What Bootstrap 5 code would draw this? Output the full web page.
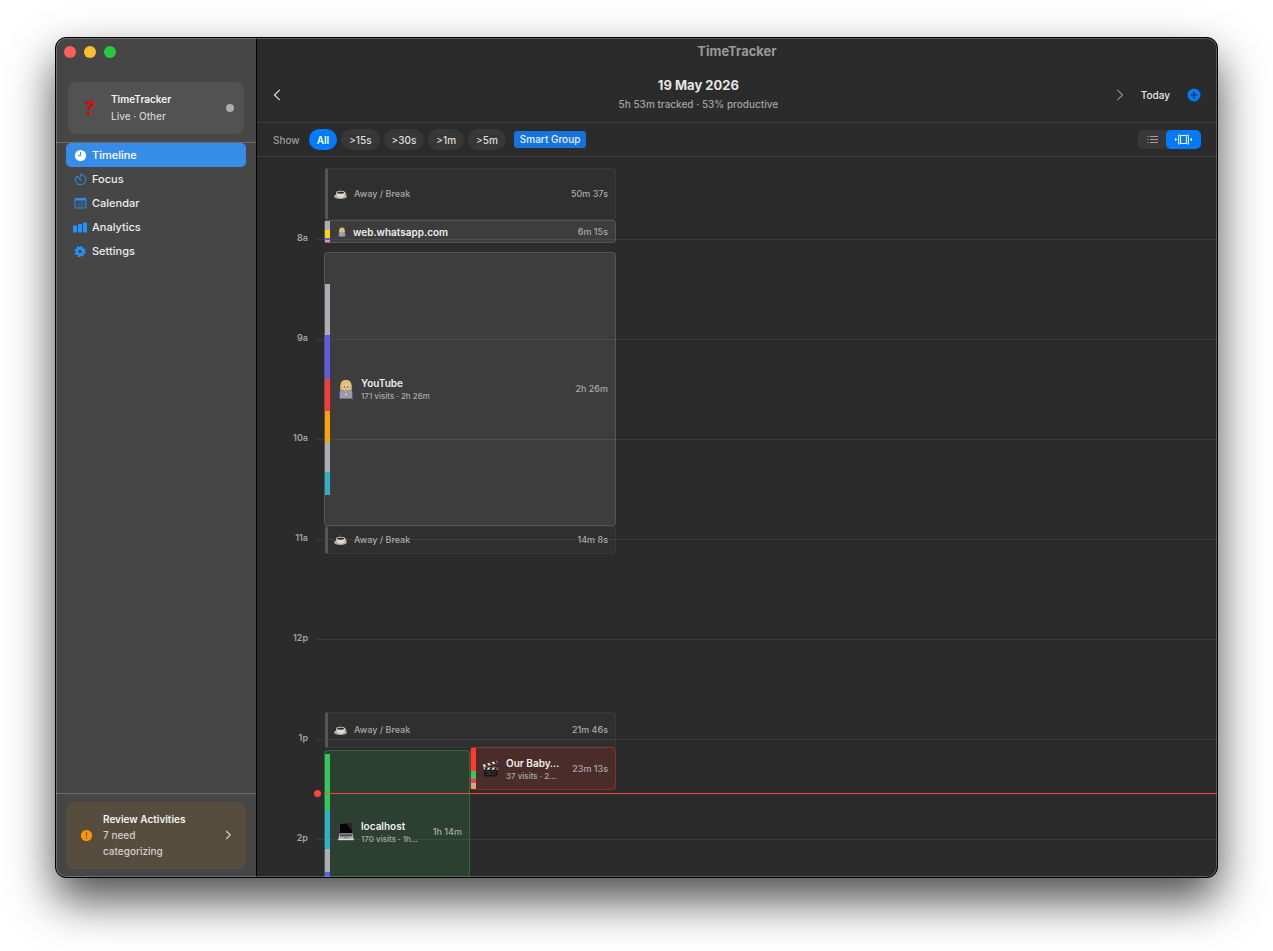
<!DOCTYPE html>
<html lang="en" data-bs-theme="dark">
<head>
<meta charset="utf-8">
<meta name="viewport" content="width=device-width, initial-scale=1">
<title>TimeTracker</title>
<link rel="stylesheet" href="https://cdn.jsdelivr.net/npm/bootstrap@5.3.0/dist/css/bootstrap.min.css">
<style>
  :root { --accent:#007aff; --rule:#3d3d3d; }
  body { background:#fff; color:#e4e4e4; font-family:Inter,"Liberation Sans",sans-serif; font-size:10px; line-height:16px; padding:37px 55px 73px; height:100vh; }
  button { font:inherit; color:inherit; border:0; background:none; padding:0; }
  svg { display:block; flex:none; }

  .window { height:100%; min-height:480px; background:#2b2b2b; border:1px solid #000; border-radius:11px; box-shadow:0 22px 46px rgba(0,0,0,.7); }
  .window::after { content:""; position:absolute; inset:0; border-radius:10px; box-shadow:inset 0 0 0 1px rgba(255,255,255,.22); pointer-events:none; z-index:5; }

  .sidebar { width:201px; background:#464646; border-right:1px solid #000; }
  .lights { padding:8px 8px 24px; gap:8px; }
  .light { width:12px; height:12px; border-radius:50%; }
  .l-close { background:#ff5f57; } .l-min { background:#febc2e; } .l-max { background:#28c840; }
  .status-card { margin:0 12px 8px; padding:10px; height:52px; gap:10px; border-radius:9px; background:#525252; font-weight:500; line-height:17px; color:#d0d0d0; }
  .status-icon { width:23px; color:#e30000; font:bold 20px/24px "Noto Sans",sans-serif; text-align:center; }
  .status-dot { width:8px; height:8px; border-radius:50%; background:#adadb0; }
  .side-rule { border-top:1px solid #6b6b6b; }
  .side-nav { padding:0 10px; }
  .side-nav .nav-link { height:24px; padding:0 8px; gap:5px; color:#ececec; border-radius:5px; font-size:11px; font-weight:500; }
  .side-nav .nav-link svg { width:13px; height:13px; color:#2292ff; }
  .side-nav .nav-link.active { background:#378ce7; color:#fff; }
  .side-nav .nav-link.active svg { color:#fff; }
  .review { margin:8px 10px; padding:9px 14px 10px; border-radius:8px; background:#574d3e; color:#d3cfc9; gap:10px; text-align:left; font-weight:500; }
  .review-count { max-width:80px; }
  .strong-text { font-weight:600; color:#f4f4f4; }

  .app-title { padding-top:4px; font-size:13px; font-weight:700; color:#999; line-height:18px; }
  .day-head { padding:16px 16px 9px; border-bottom:1px solid var(--rule); }
  .day-name { font-size:13px; font-weight:700; line-height:19px; }
  .day-sum { line-height:18px; font-weight:500; color:#a2a2a2; }
  .today { margin:0 17px; font-weight:500; }
  .filters { height:34px; padding:0 16px; border-bottom:1px solid var(--rule); }
  .show-label { margin-right:5px; font-weight:500; color:#9b9b9b; }
  .pill { height:21px; padding:0 8px; border-radius:11px; background:#373737; font-weight:500; color:#dedede; }
  .pill.active { background:var(--accent); color:#fff; font-weight:600; }
  .smart { height:17px; padding:0 6px; border-radius:3px; background:#1673dc; font-weight:500; line-height:17px; margin-left:4px; color:#e8f1fc; }
  .view-switch { height:19px; border-radius:5px; background:#373737; color:#aaa; overflow:hidden; }
  .view-switch button { width:28px; }
  .view-switch button.active { width:35px; border-radius:5px; background:var(--accent); color:#fff; }

  .timeline { min-height:0; scrollbar-width:none; }
  .timeline::-webkit-scrollbar { display:none; }
  .hours { padding-top:82px; }
  .hour { height:100px; }
  .hour time { width:51px; margin:-7px 8px 0 0; font-size:9px; font-weight:600; line-height:12px; color:#a3a3a3; text-align:right; }
  .hour i { border-top:1px solid rgba(255,255,255,.07); height:0; }
  .events { position:absolute; top:0; left:67px; width:292px; display:grid; grid-template-columns:1fr 1fr; grid-auto-rows:1px; }
  .event { grid-row:var(--from) / span var(--span); grid-column:1 / -1; min-width:0; position:relative; padding:0 7px 0 13px; gap:7px; border:1px solid rgba(255,255,255,.13); border-radius:4px; background:rgba(255,255,255,.085); }
  .event.half-a { grid-column:1; background:rgba(52,199,89,.14); border-color:rgba(52,199,89,.3); }
  .event.half-b { grid-column:2; padding-left:11px; background:rgba(255,59,48,.15); border-color:rgba(255,59,48,.3); }
  .event.away { margin-left:1px; padding-left:6px; gap:6px; background:rgba(255,255,255,.025); border-color:rgba(255,255,255,.05); border-left:3px solid #555; border-radius:2px 4px 4px 2px; }
  .away-name, .took { font-size:9px; font-weight:500; color:#aaa; white-space:nowrap; }
  .ev-name { font-weight:600; line-height:14px; color:#eee; white-space:nowrap; }
  .ev-sub { font-size:8px; font-weight:500; line-height:12px; color:#aaa; white-space:nowrap; }
  .strip { position:absolute; left:0; top:var(--lead,0); width:5px; }
  .strip b { display:block; }
  .c-gray { background:#aeaeb2; } .c-indigo { background:#5e5ce6; } .c-red { background:#ff3b30; } .c-orange { background:#ff9f0a; }
  .c-teal { background:#30b0c7; } .c-green { background:#34c759; } .c-yellow { background:#ffd60a; } .c-pink { background:#ff375f; }
  .now { position:absolute; left:57px; right:0; top:var(--at); gap:3px; z-index:2; }
  .now span { width:7px; height:7px; border-radius:50%; background:#ff453a; }
  .now i { height:1px; background:#f04a40; }
</style>
</head>
<body>
<svg class="d-none" aria-hidden="true">
  <symbol id="cup" viewBox="0 0 14 12">
    <ellipse cx="6.500" cy="8.400" rx="6.300" ry="2.600" fill="#b3afa8"/>
    <path d="M2.300 4.500h8.600c.2 3.400-1.600 5.300-4.300 5.300s-4.500-1.900-4.300-5.300z" fill="#dedbd5"/>
    <path d="M10.700 5.300c1.900-.4 2 1.700-.6 2.300" fill="none" stroke="#dedbd5" stroke-width=".9"/>
    <ellipse cx="6.600" cy="4.500" rx="4.300" ry="1.700" fill="#eceae5"/>
    <ellipse cx="6.600" cy="4.600" rx="3.600" ry="1.200" fill="#3f241a"/>
    <path d="M6 .5c-.8 1 .8 1.400 0 2.500" fill="none" stroke="#777" stroke-width=".6"/>
  </symbol>
  <symbol id="coder" viewBox="0 0 16 20">
    <path d="M.8 19v-3.500c0-3 2.500-4 7.200-4s7.200 1 7.200 4V19z" fill="#3346b5"/>
    <path d="M2.500 11.500C1.300 4.500 3.500 .8 8 .8s6.700 3.700 5.500 10.700z" fill="#dfc06c"/>
    <path d="M6 10h4v3H6z" fill="#d9a983"/>
    <path d="M4.400 6.500C5.800 6.200 7 5.600 8 4.600c1 1 2.200 1.600 3.600 1.900.2 3.200-1.400 5-3.600 5s-3.800-1.800-3.600-5z" fill="#efc6a1"/>
    <circle cx="6.400" cy="7.900" r=".7" fill="#4d3425"/><circle cx="9.600" cy="7.900" r=".7" fill="#4d3425"/>
    <path d="M7 10q1 .6 2 0" fill="none" stroke="#a8563f" stroke-width=".6"/>
    <rect x="1.800" y="11.600" width="12.400" height="7.600" rx=".8" fill="#9a9ca3"/>
    <circle cx="8" cy="15.300" r=".9" fill="#e6e6e8"/><path d="M1 19h14v.8H1z" fill="#777b84"/>
  </symbol>
  <symbol id="laptop" viewBox="0 0 18 19">
    <path d="M1.500 1h15v10.500h-15z" fill="#5b5b5b"/><path d="M2 1.500h14V11H2z" fill="#050505"/>
    <path d="M9 1.500h7V9z" fill="#242424"/>
    <path d="M1.700 11.500h14.600l1.400 5.500H.3z" fill="#b5b5b8"/><path d="M2.500 12.200h13l.6 2.300H1.900z" fill="#505055"/>
    <path d="M6.500 15h5l.3 1.500H6.200z" fill="#8b8b90"/><path d="M.3 17h17.400v1.200H.3z" fill="#e0e0e2"/>
  </symbol>
  <symbol id="clapper" viewBox="0 0 18 18">
    <path d="M2 8.500h14.500v8L14 17.500H2z" fill="#161616"/><path d="M2 8h14.500v2.300H2z" fill="#e5e5e5"/>
    <path d="M4 8h2.500L5 10.300H2.500zm5 0h2.500L10 10.300H7.500zm5 0h2.500L15 10.300h-2.500z" fill="#161616"/>
    <path d="M.8 5 15.800.8l.6 2.300L1.500 7.300z" fill="#e5e5e5"/>
    <path d="m3 4.400 2.300-.7 1.700 2-2.300.7zm4.800-1.300 2.300-.7 1.700 2-2.300.7zm4.700-1.400 2.300-.6 1.600 2-2.200.6z" fill="#161616"/>
    <path d="M1 7.300 2.500 7v2H2z" fill="#777"/><path d="M3.500 12.500H15M3.500 15H15M8 12.500V15" stroke="#555" stroke-width=".6"/>
  </symbol>
</svg>

<div class="window position-relative d-flex overflow-hidden">
  <aside class="sidebar d-flex flex-column flex-shrink-0">
    <div class="lights d-flex">
      <span class="light l-close"></span><span class="light l-min"></span><span class="light l-max"></span>
    </div>
    <div class="status-card d-flex align-items-center">
      <span class="status-icon">?</span>
      <div class="flex-grow-1">
        <div class="strong-text">TimeTracker</div>
        <div>Live · Other</div>
      </div>
      <span class="status-dot"></span>
    </div>
    <nav class="side-rule flex-grow-1">
      <ul class="side-nav nav flex-column">
        <li><a class="nav-link active d-flex align-items-center" href="#timeline"><svg viewBox="0 0 13 13"><circle cx="6.500" cy="6.500" r="5.600" fill="currentColor"/><path d="M6.500 3v3.700H4" fill="none" stroke="#378ce7"/></svg>Timeline</a></li>
        <li><a class="nav-link d-flex align-items-center" href="#focus"><svg viewBox="0 0 13 13" fill="none" stroke="currentColor" stroke-linecap="round"><path d="M6.500 3.300V1.200a5.300 5.300 0 1 1-4 1.800"/><path d="M3.600 3.600 6.800 6.800" stroke-width="1.300"/></svg>Focus</a></li>
        <li><a class="nav-link d-flex align-items-center" href="#calendar"><svg viewBox="0 0 13 13" fill="none" stroke="currentColor"><rect x="1" y="1.500" width="11" height="9.500" rx="1.200"/><path d="M1 2.500H12" stroke-width="2"/><path d="M5.400 5.500h5M3.400 7.300h7M3.400 9.100h5" stroke-dasharray="1 1" stroke-width=".9"/></svg>Calendar</a></li>
        <li><a class="nav-link d-flex align-items-center" href="#analytics"><svg viewBox="0 0 13 13" fill="currentColor" overflow="visible"><rect x="-1" y="4.500" width="4" height="7" rx="1"/><rect x="4" y="3" width="4" height="8.500" rx="1"/><rect x="9" y="1.500" width="4" height="10" rx="1"/></svg>Analytics</a></li>
        <li><a class="nav-link d-flex align-items-center" href="#settings"><svg viewBox="0 0 13 13" fill="none" stroke="currentColor"><circle cx="6" cy="6.500" r="3.100" stroke-width="2.600"/><circle cx="6" cy="6.500" r="4.700" stroke-width="1.900" stroke-dasharray="2 1.691"/></svg>Settings</a></li>
      </ul>
    </nav>
    <div class="side-rule d-flex">
      <button type="button" class="review d-flex align-items-center flex-grow-1">
        <svg width="13" height="13" viewBox="0 0 13 13"><circle cx="6.500" cy="6.500" r="5.600" fill="#ff9500"/><path d="M6.500 3.300v3.900M6.500 8.600v1.100" stroke="#574d3e" stroke-width="1.200"/></svg>
        <span class="flex-grow-1"><span class="strong-text d-block">Review Activities</span><span class="review-count d-block">7 need categorizing</span></span>
        <svg width="7" height="10" viewBox="0 0 7 10" fill="none" stroke="#c9c5bf" stroke-width="1.300"><path d="m1.200 1 4 4-4 4"/></svg>
      </button>
    </div>
  </aside>

  <main class="d-flex flex-column flex-grow-1 overflow-hidden">
    <div class="app-title text-center flex-shrink-0">TimeTracker</div>
    <header class="day-head d-flex align-items-center flex-shrink-0">
      <button type="button" aria-label="Previous day"><svg width="8" height="12" viewBox="0 0 8 12" fill="none" stroke="#e0e0e0" stroke-width="1.200"><path d="M6.700.8 1.500 6l5.200 5.200"/></svg></button>
      <div class="flex-grow-1 text-center"><div class="day-name">19 May 2026</div><div class="day-sum">5h 53m tracked · 53% productive</div></div>
      <button type="button" aria-label="Next day"><svg width="8" height="12" viewBox="0 0 8 12" fill="none" stroke="#8b8b8b" stroke-width="1.200"><path d="m1.300.8 5.200 5.200-5.200 5.200"/></svg></button>
      <button type="button" class="today">Today</button>
      <button type="button" aria-label="Add activity"><svg width="14" height="14" viewBox="0 0 14 14"><circle cx="7" cy="7" r="6.500" fill="#007aff"/><path d="M7 3.800v6.400M3.800 7h6.400" stroke="#222" stroke-width="1.200"/></svg></button>
    </header>
    <div class="filters d-flex align-items-center gap-1 flex-shrink-0">
      <span class="show-label">Show</span>
      <button type="button" class="pill active">All</button>
      <button type="button" class="pill">&gt;15s</button>
      <button type="button" class="pill">&gt;30s</button>
      <button type="button" class="pill">&gt;1m</button>
      <button type="button" class="pill">&gt;5m</button>
      <button type="button" class="smart">Smart Group</button>
      <div class="view-switch d-flex ms-auto" role="group" aria-label="View">
        <button type="button" class="d-flex align-items-center justify-content-center" aria-label="List"><svg width="11" height="9" viewBox="0 0 11 9" stroke="currentColor" fill="none"><path d="M3 1.500h8M3 4.500h8M3 7.500h8M.5 1.500h1M.5 4.500h1M.5 7.500h1" stroke-width=".9"/></svg></button>
        <button type="button" class="active d-flex align-items-center justify-content-center" aria-label="Timeline"><svg width="17" height="11" viewBox="0 0 17 11"><rect x="5.500" y="1.500" width="6" height="8" rx=".8" fill="none" stroke="currentColor" stroke-width="1.200"/><path d="M5 1H3.500v9H5M12 1h1.500v9H12" fill="none" stroke="currentColor" stroke-width=".9"/><path d="M0 3.700 2.200 5.500 0 7.300zM17 3.700 14.800 5.500 17 7.300z" fill="currentColor"/></svg></button>
      </div>
    </div>

    <section class="timeline position-relative flex-grow-1 overflow-auto" id="timeline">
      <div class="hours">
        <div class="hour d-flex"><time>8a</time><i class="flex-grow-1"></i></div>
        <div class="hour d-flex"><time>9a</time><i class="flex-grow-1"></i></div>
        <div class="hour d-flex"><time>10a</time><i class="flex-grow-1"></i></div>
        <div class="hour d-flex"><time>11a</time><i class="flex-grow-1"></i></div>
        <div class="hour d-flex"><time>12p</time><i class="flex-grow-1"></i></div>
        <div class="hour d-flex"><time>1p</time><i class="flex-grow-1"></i></div>
        <div class="hour d-flex"><time>2p</time><i class="flex-grow-1"></i></div>
      </div>
      <div class="events">
        <article class="event away d-flex align-items-center" style="--from:12;--span:52">
          <svg width="14" height="12"><use href="#cup"/></svg><span class="away-name flex-grow-1">Away / Break</span><span class="took">50m 37s</span>
        </article>
        <article class="event d-flex align-items-center" style="--from:64;--span:23">
          <div class="strip"><b class="c-gray" style="height:9px"></b><b class="c-yellow" style="height:8px"></b><b class="c-indigo" style="height:2px"></b><b class="c-gray" style="height:2px"></b><b class="c-pink" style="height:1px"></b></div>
          <svg width="8" height="10"><use href="#coder"/></svg><span class="ev-name flex-grow-1">web.whatsapp.com</span><span class="took">6m 15s</span>
        </article>
        <article class="event d-flex align-items-center" style="--from:96;--span:274">
          <div class="strip" style="--lead:31px"><b class="c-gray" style="height:51px"></b><b class="c-indigo" style="height:44px"></b><b class="c-red" style="height:32px"></b><b class="c-orange" style="height:31px"></b><b class="c-gray" style="height:30px"></b><b class="c-teal" style="height:23px"></b></div>
          <svg width="16" height="20"><use href="#coder"/></svg>
          <div class="flex-grow-1"><div class="ev-name">YouTube</div><div class="ev-sub">171 visits · 2h 26m</div></div><span class="took">2h 26m</span>
        </article>
        <article class="event away d-flex align-items-center" style="--from:370;--span:28">
          <svg width="14" height="12"><use href="#cup"/></svg><span class="away-name flex-grow-1">Away / Break</span><span class="took">14m 8s</span>
        </article>
        <article class="event away d-flex align-items-center" style="--from:556;--span:36">
          <svg width="14" height="12"><use href="#cup"/></svg><span class="away-name flex-grow-1">Away / Break</span><span class="took">21m 46s</span>
        </article>
        <article class="event half-a d-flex align-items-center" style="--from:594;--span:163">
          <div class="strip" style="--lead:3px"><b class="c-green" style="height:56px"></b><b class="c-teal" style="height:39px"></b><b class="c-gray" style="height:23px"></b><b class="c-indigo" style="height:30px"></b></div>
          <svg width="16" height="19" viewBox="0 0 18 19" preserveAspectRatio="none"><use href="#laptop" width="18" height="19"/></svg>
          <div class="flex-grow-1"><div class="ev-name">localhost</div><div class="ev-sub">170 visits · 1h…</div></div><span class="took">1h 14m</span>
        </article>
        <article class="event half-b d-flex align-items-center" style="--from:591;--span:43">
          <div class="strip"><b class="c-red" style="height:23px"></b><b class="c-green" style="height:8px"></b><b class="c-pink" style="height:4px"></b><b class="c-gray" style="height:4px"></b><b class="c-orange" style="height:2px"></b></div>
          <svg width="17" height="17"><use href="#clapper"/></svg>
          <div class="flex-grow-1"><div class="ev-name">Our Baby…</div><div class="ev-sub">37 visits · 2…</div></div><span class="took">23m 13s</span>
        </article>
      </div>
      <div class="now d-flex align-items-center" style="--at:633px"><span></span><i class="flex-grow-1"></i></div>
    </section>
  </main>
</div>
<script src="https://cdn.jsdelivr.net/npm/bootstrap@5.3.0/dist/js/bootstrap.bundle.min.js"></script>
</body>
</html>
